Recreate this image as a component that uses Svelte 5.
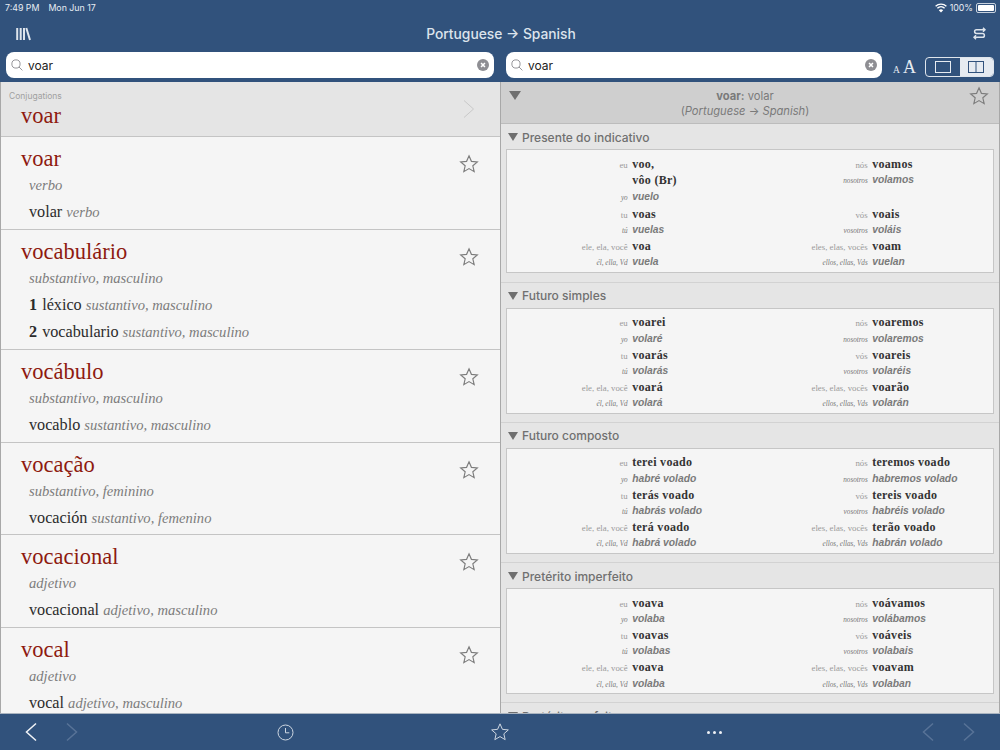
<script>
	const entries = [
		{ word: 'voar', pos: 'verbo', trans: [{ text: 'volar', pos: 'verbo' }] },
		{
			word: 'vocabulário',
			pos: 'substantivo, masculino',
			trans: [
				{ n: 1, text: 'léxico', pos: 'sustantivo, masculino' },
				{ n: 2, text: 'vocabulario', pos: 'sustantivo, masculino' }
			]
		},
		{ word: 'vocábulo', pos: 'substantivo, masculino', trans: [{ text: 'vocablo', pos: 'sustantivo, masculino' }] },
		{ word: 'vocação', pos: 'substantivo, feminino', trans: [{ text: 'vocación', pos: 'sustantivo, femenino' }] },
		{ word: 'vocacional', pos: 'adjetivo', trans: [{ text: 'vocacional', pos: 'adjetivo, masculino' }] },
		{ word: 'vocal', pos: 'adjetivo', trans: [{ text: 'vocal', pos: 'adjetivo, masculino' }] }
	];

	const ptPron = ['eu', 'tu', 'ele, ela, você', 'nós', 'vós', 'eles, elas, vocês'];
	const esPron = ['yo', 'tú', 'él, ella, Vd', 'nosotros', 'vosotros', 'ellos, ellas, Vds'];

	const tenses = [
		{
			name: 'Presente do indicativo',
			pt: ['voo,|vôo (Br)', 'voas', 'voa', 'voamos', 'voais', 'voam'],
			es: ['vuelo', 'vuelas', 'vuela', 'volamos', 'voláis', 'vuelan']
		},
		{
			name: 'Futuro simples',
			pt: ['voarei', 'voarás', 'voará', 'voaremos', 'voareis', 'voarão'],
			es: ['volaré', 'volarás', 'volará', 'volaremos', 'volaréis', 'volarán']
		},
		{
			name: 'Futuro composto',
			pt: ['terei voado', 'terás voado', 'terá voado', 'teremos voado', 'tereis voado', 'terão voado'],
			es: ['habré volado', 'habrás volado', 'habrá volado', 'habremos volado', 'habréis volado', 'habrán volado']
		},
		{
			name: 'Pretérito imperfeito',
			pt: ['voava', 'voavas', 'voava', 'voávamos', 'voáveis', 'voavam'],
			es: ['volaba', 'volabas', 'volaba', 'volábamos', 'volabais', 'volaban']
		},
		{ name: 'Pretérito perfeito', pt: [], es: [] }
	];

	const starPath = 'M12 2.2l2.9 6.6 7.1.7-5.4 4.7 1.6 7-6.2-3.7-6.2 3.7 1.6-7L2 9.5l7.1-.7z';
</script>

{#snippet star(size, cls)}
	<svg class={cls} width={size} height={size} viewBox="0 0 24 24"><path d={starPath} /></svg>
{/snippet}

{#snippet searchBox(cls)}
	<div class="search {cls}">
		<svg class="glass" width="12" height="12" viewBox="0 0 14 14">
			<circle cx="5.800" cy="5.800" r="4.800" />
			<path d="M9.300 9.300l4 4" />
		</svg>
		<span class="query">voar</span>
		<svg class="clear" width="12" height="12" viewBox="0 0 13 13">
			<circle cx="6.500" cy="6.500" r="6.500" />
			<path d="M4.400 4.400l4.200 4.200M8.600 4.400l-4.200 4.200" />
		</svg>
	</div>
{/snippet}

{#snippet chevron(dir, cls)}
	<svg class={cls} width="14" height="20" viewBox="0 0 14 20">
		<path d={dir === 'left' ? 'M12 1.500L2.500 10 12 18.500' : 'M2 1.500L11.500 10 2 18.500'} />
	</svg>
{/snippet}

{#snippet person(ptPr, esPr, pt, es)}
	<div class="person" class:multi={pt.includes('|')}>
		{#each pt.split('|') as form, i}
			<span class="pron">{i === 0 ? ptPr : ''}</span>
			<span class="form-pt">{form}</span>
		{/each}
		<span class="pron-es">{esPr}</span>
		<span class="form-es">{es}</span>
	</div>
{/snippet}

<div class="app">
	<header class="top">
		<div class="status">
			<div class="status-left">
				<span>7:49 PM</span>
				<span>Mon Jun 17</span>
			</div>
			<div class="status-right">
				<svg width="12" height="10" viewBox="0 0 12 10">
					<path class="wifi" d="M.6 3.300a7.800 7.800 0 0 1 10.800 0M2.400 5.200a5.200 5.200 0 0 1 7.200 0" />
					<path class="wifi-dot" d="M6 9.600L3.800 7.300a3.100 3.100 0 0 1 4.400 0z" />
				</svg>
				<span>100%</span>
				<span class="battery"><span class="battery-fill"></span></span>
			</div>
		</div>
		<div class="nav">
			<svg class="books" width="15" height="14" viewBox="0 0 15 14">
				<path d="M1.200 1v12M4.700 1v12M8 1v12M10.300 1l3.700 12" />
			</svg>
			<div class="title">Portuguese → Spanish</div>
			<svg class="swap" width="13" height="13" viewBox="0 0 13 13">
				<path d="M12 2.700H3.500a1.900 1.900 0 0 0 0 3.800h6a1.900 1.900 0 0 1 0 3.800H1M10 .7l2 2-2 2M3 8.300l-2 2 2 2" />
			</svg>
		</div>
		<div class="search-row">
			<div class="search-left">
				{@render searchBox('')}
			</div>
			<div class="search-right">
				{@render searchBox('grow')}
				<div class="font-size"><span class="small-a">A</span><span class="big-a">A</span></div>
				<div class="segment">
					<div class="seg seg-on">
						<svg viewBox="0 0 16 12"><rect x=".5" y=".5" width="15" height="11" /></svg>
					</div>
					<div class="seg seg-off">
						<svg viewBox="0 0 16 12"><rect x=".5" y=".5" width="15" height="11" /><path d="M8 .5v11" /></svg>
					</div>
				</div>
			</div>
		</div>
	</header>

	<main class="panes">
		<section class="left">
			<div class="conj">
				<div class="conj-text">
					<div class="conj-label">Conjugations</div>
					<div class="headword conj-word">voar</div>
				</div>
				{@render chevron('right', 'conj-chev')}
			</div>
			{#each entries as entry}
				<article class="entry">
					<div class="entry-body">
						<div class="headword">{entry.word}</div>
						<div class="pos">{entry.pos}</div>
						{#each entry.trans as t}
							<div class="trans">
								{#if t.n}<span class="num">{t.n}</span>{/if}
								{t.text}
								<span class="trans-pos">{t.pos}</span>
							</div>
						{/each}
					</div>
					{@render star(20, 'star')}
				</article>
			{/each}
		</section>

		<section class="right">
			<div class="detail-head">
				<span class="tri big"></span>
				<div class="detail-title">
					<div><b>voar:</b> volar</div>
					<div>(<i>Portuguese</i> → <i>Spanish</i>)</div>
				</div>
				{@render star(20, 'star')}
			</div>
			{#each tenses as tense}
				<div class="tense">
					<div class="tense-name"><span class="tri"></span>{tense.name}</div>
					{#if tense.pt.length}
						<div class="table">
							{#each [0, 1, 2] as i}
								{@render person(ptPron[i], esPron[i], tense.pt[i], tense.es[i])}
								{@render person(ptPron[i + 3], esPron[i + 3], tense.pt[i + 3], tense.es[i + 3])}
							{/each}
						</div>
					{/if}
				</div>
			{/each}
		</section>
	</main>

	<footer class="bottom">
		<div class="bottom-group">
			{@render chevron('left', 'nav-on')}
			{@render chevron('right', 'nav-off')}
		</div>
		<svg class="clock" width="17" height="17" viewBox="0 0 17 17">
			<circle cx="8.500" cy="8.500" r="7.500" />
			<path d="M8.500 4v4.800h3.800" />
		</svg>
		<svg class="bottom-star" width="20" height="20" viewBox="0 0 24 24"><path d={starPath} /></svg>
		<div class="dots"><span></span><span></span><span></span></div>
		<div class="bottom-group right-group">
			{@render chevron('left', 'nav-off')}
			{@render chevron('right', 'nav-off')}
		</div>
	</footer>
</div>

<style>
	:global(body) {
		margin: 0;
		overflow: hidden;
	}

	.app {
		width: 1000px;
		height: 750px;
		display: flex;
		flex-direction: column;
		overflow: hidden;
		font-family: Inter, 'Liberation Sans', sans-serif;
		background: #31527c;
	}

	.top {
		height: 82px;
		flex-shrink: 0;
		background: #31527c;
		color: #fff;
	}

	.status {
		height: 15px;
		padding: 0 4px 0 5px;
		display: flex;
		justify-content: space-between;
		align-items: center;
		font-size: 8.800px;
		color: #e8edf3;
	}

	.status-left {
		display: flex;
		gap: 9px;
	}

	.status-right {
		display: flex;
		align-items: center;
		gap: 3px;
	}

	.wifi {
		fill: none;
		stroke: #fff;
		stroke-width: 1.300;
	}

	.wifi-dot {
		fill: #fff;
	}

	.battery {
		width: 16px;
		height: 6px;
		border: 1px solid #c8d2df;
		border-radius: 2px;
		padding: 1px;
		box-sizing: content-box;
		display: flex;
	}

	.battery-fill {
		flex: 1;
		background: #fff;
		border-radius: 1px;
	}

	.nav {
		height: 37px;
		display: grid;
		grid-template-columns: 1fr auto 1fr;
		align-items: center;
		padding: 0 14px 0 16px;
	}

	.books,
	.swap {
		fill: none;
		stroke: #dde4ec;
		stroke-width: 1.500;
	}

	.books {
		stroke-width: 2;
	}

	.swap {
		justify-self: end;
	}

	.title {
		font-size: 13.800px;
		font-weight: 500;
		color: #dde4ec;
	}

	.search-row {
		display: flex;
		height: 30px;
	}

	.search-left,
	.search-right {
		width: 500px;
		box-sizing: border-box;
		display: flex;
		align-items: flex-start;
		padding: 0 6px;
	}

	.search {
		height: 26px;
		flex: 1;
		box-sizing: border-box;
		background: #fff;
		border-radius: 8px;
		display: flex;
		align-items: center;
		padding: 0 5px;
		gap: 5px;
	}

	.search.grow {
		flex: 0 0 376px;
	}

	.glass {
		fill: none;
		stroke: #8e8e93;
		stroke-width: 1.100;
	}

	.query {
		flex: 1;
		font-size: 12px;
		color: #222;
	}

	.clear circle {
		fill: #8e8e93;
	}

	.clear path {
		stroke: #fff;
		stroke-width: 1.700;
		fill: none;
	}

	.font-size {
		width: 43px;
		box-sizing: border-box;
		padding-left: 11px;
		font-family: 'Liberation Serif', serif;
		color: #e6ebf1;
		line-height: 26px;
		margin-top: 2px;
		white-space: nowrap;
	}

	.small-a {
		font-size: 9.500px;
		margin-right: 3px;
	}

	.big-a {
		font-size: 18px;
	}

	.segment {
		width: 69px;
		height: 20px;
		margin-top: 5px;
		box-sizing: border-box;
		display: flex;
		border: 1px solid #dfe5ec;
		border-radius: 4px;
		overflow: hidden;
	}

	.seg {
		flex: 1;
		display: flex;
		align-items: center;
		justify-content: center;
	}

	.seg svg {
		fill: none;
		width: 16px;
		height: 12px;
	}

	.seg-on svg {
		stroke: #e6ebf1;
	}

	.seg-off {
		background: #e6ebf1;
	}

	.seg-off svg {
		stroke: #31527c;
	}

	.panes {
		flex: 1;
		min-height: 0;
		display: flex;
		background: #e5e5e5;
	}

	.left,
	.right {
		height: 631px;
		overflow: hidden;
		box-sizing: border-box;
	}

	.left {
		width: 500px;
		border-left: 1px solid #a8a8a8;
		background: #f5f5f5;
	}

	.right {
		width: 500px;
		border-left: 1px solid #a8a8a8;
		border-right: 1px solid #a8a8a8;
		background: #e5e5e5;
	}

	.conj {
		height: 55px;
		box-sizing: border-box;
		background: #e5e5e5;
		border-bottom: 1px solid #c4c4c4;
		display: flex;
		justify-content: space-between;
		align-items: center;
		padding: 0 24px 0 8px;
	}

	.conj-label {
		font-size: 8.500px;
		line-height: 12px;
		color: #a0a0a0;
		margin-top: 2px;
	}

	.conj-word {
		margin-left: 12px;
	}

	:global(.conj-chev) {
		fill: none;
		stroke: #c9c9c9;
		stroke-width: 1;
	}

	.headword {
		font-family: 'Liberation Serif', serif;
		font-size: 22.500px;
		line-height: 28px;
		color: #8e1a10;
	}

	.entry {
		display: flex;
		justify-content: space-between;
		align-items: flex-start;
		padding: 8px 21px 2.200px 20px;
		border-bottom: 1px solid #c4c4c4;
	}

	.pos {
		font-family: 'Liberation Serif', serif;
		font-style: italic;
		font-size: 14.600px;
		line-height: 24px;
		margin-bottom: 2px;
		color: #7c7c7c;
		margin-left: 8px;
	}

	.trans {
		font-family: 'Liberation Serif', serif;
		font-size: 16.200px;
		line-height: 27.500px;
		height: 27.500px;
		color: #2c2c2c;
		margin-left: 8px;
	}

	.num {
		font-weight: 700;
		margin-right: 1px;
	}

	.trans-pos {
		font-style: italic;
		font-size: 14.600px;
		color: #7c7c7c;
	}

	:global(.star) {
		fill: none;
		stroke: #7d7d7d;
		stroke-width: 1.400;
		flex-shrink: 0;
		margin-top: 9px;
	}

	.detail-head {
		height: 42px;
		box-sizing: border-box;
		background: #cfcfcf;
		border-bottom: 1px solid #bcbcbc;
		display: flex;
		justify-content: space-between;
		align-items: flex-start;
		padding: 0 10px 0 8px;
		font-size: 11.200px;
		line-height: 15px;
		color: #7a7a7a;
	}

	.detail-head :global(.star) {
		margin-top: 4px;
	}

	.detail-title {
		flex: 1;
		text-align: center;
		padding-top: 7px;
	}

	.tri {
		width: 0;
		height: 0;
		display: inline-block;
		border-left: 5px solid transparent;
		border-right: 5px solid transparent;
		border-top: 8px solid #6f6f6f;
		margin-right: 4px;
	}

	.tri.big {
		border-left-width: 6.500px;
		border-right-width: 6.500px;
		border-top-width: 9px;
		margin-top: 9px;
		margin-right: 0;
	}

	.tense {
		padding: 0 5px 8px;
		border-bottom: 1px solid #d2d2d2;
	}

	.tense:nth-child(2) {
		padding-bottom: 9px;
	}

	.tense-name {
		height: 25px;
		box-sizing: border-box;
		padding: 1px 0 0 2px;
		display: flex;
		align-items: center;
		font-size: 12px;
		font-weight: 500;
		color: #707070;
	}

	.table {
		display: grid;
		grid-template-columns: 240px 1fr;
		align-items: start;
		background: #f5f5f5;
		border: 1px solid #c6c6c6;
		padding: 5.500px 0 1.500px;
	}

	.person {
		display: grid;
		grid-template-columns: 120.700px 1fr;
		grid-auto-rows: 16.200px;
		column-gap: 4.500px;
		line-height: 16.200px;
		align-items: baseline;
	}

	.person.multi {
		grid-auto-rows: 16.700px;
	}

	.pron,
	.pron-es {
		text-align: right;
		font-family: 'Liberation Serif', serif;
		color: #9a9a9a;
		white-space: nowrap;
	}

	.pron {
		font-size: 8.800px;
	}

	.pron-es {
		font-size: 7.200px;
		font-style: italic;
		color: #777;
	}

	.form-pt {
		font-family: 'Liberation Serif', serif;
		font-weight: 700;
		font-size: 12px;
		letter-spacing: 0.3px;
		color: #333;
	}

	.form-es {
		font-family: 'Liberation Sans', sans-serif;
		font-weight: 700;
		font-style: italic;
		font-size: 10.300px;
		color: #7a7a7a;
	}

	.bottom {
		height: 37px;
		flex-shrink: 0;
		background: #31527c;
		display: grid;
		grid-template-columns: 178px 215px 214px 214px 179px;
		align-items: center;
		justify-items: center;
		border-top: 1px solid #aab4c0;
		box-sizing: border-box;
	}

	.bottom-group {
		display: flex;
		gap: 27px;
		justify-self: start;
		margin-left: 24px;
	}

	.right-group {
		justify-self: end;
		margin-left: 0;
		margin-right: 24px;
	}

	:global(.nav-on),
	:global(.nav-off) {
		fill: none;
		stroke-width: 1.500;
	}

	:global(.nav-on) {
		stroke: #f0f3f7;
	}

	:global(.nav-off) {
		stroke: #587397;
	}

	.clock {
		fill: none;
		stroke: #cdd6e1;
		stroke-width: 1;
	}

	.bottom-star {
		fill: none;
		stroke: #cdd6e1;
		stroke-width: 1.200;
	}

	.dots {
		display: flex;
		gap: 3px;
	}

	.dots span {
		width: 3px;
		height: 3px;
		border-radius: 50%;
		background: #eef1f5;
	}
</style>
